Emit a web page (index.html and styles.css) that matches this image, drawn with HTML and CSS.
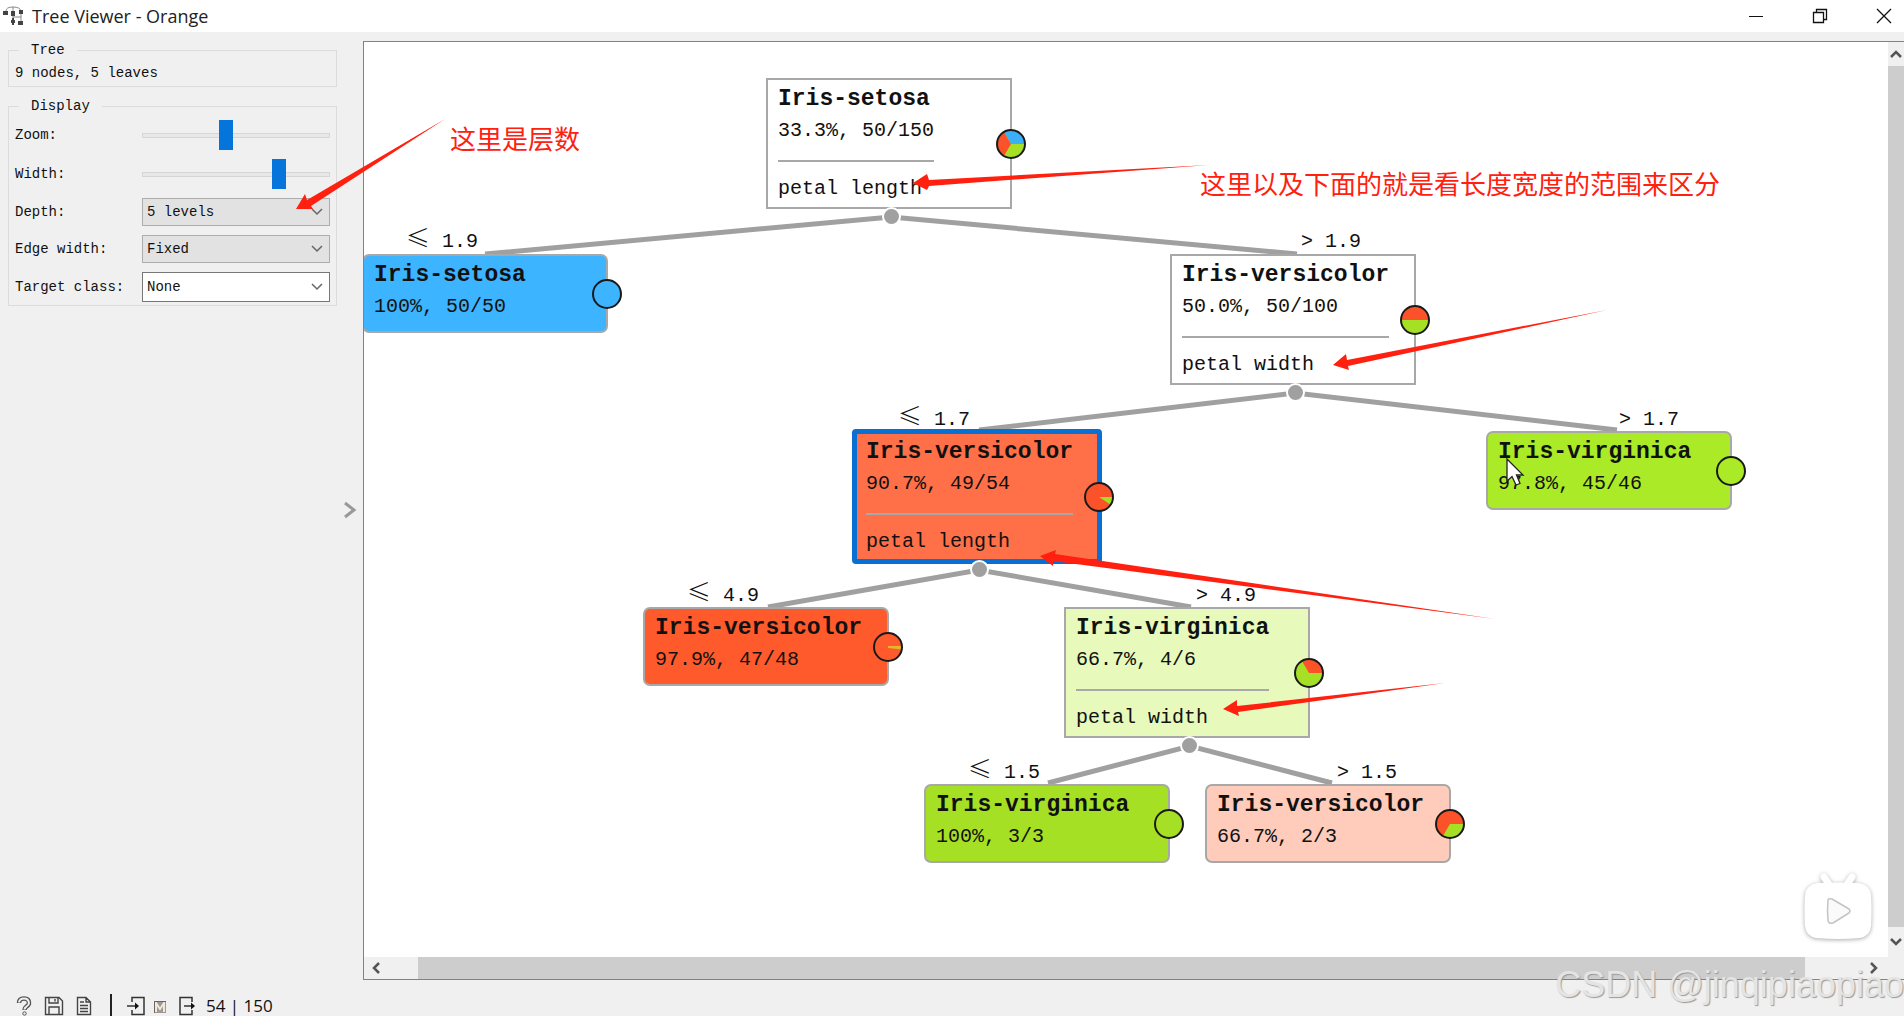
FILE: index.html
```html
<!DOCTYPE html>
<html lang="en">
<head>
<meta charset="utf-8">
<title>Tree Viewer - Orange</title>
<link rel="stylesheet" href="styles.css">
</head>
<body>
<header class="titlebar">
  <svg class="app-icon" width="20" height="20" viewBox="0 0 20 20" fill="#444" stroke="#888">
    <path d="M3 5Q3 1 10 1T18 5M10 1V12M10 11H18M18 8V15" fill="none"/>
    <path stroke="none" d="M0 5h5v4H0zM8 5h4v5H8zM16 4h4v4h-4zM8 14h4v3H8zM9 12h2v7H9zM15 15h5v4h-5z"/>
  </svg>
  <h1 class="title">Tree Viewer - Orange</h1>
  <div class="window-buttons">
    <button type="button" aria-label="Minimize"><svg width="16" height="16" stroke="#111" fill="none"><path d="M1 8.500h14"/></svg></button>
    <button type="button" aria-label="Restore"><svg width="16" height="16" stroke="#111" fill="none" stroke-width="1.300"><path d="M1.500 4.500h10v10h-10zM4.500 4V1.500h10v10H12"/></svg></button>
    <button type="button" aria-label="Close"><svg width="16" height="16" stroke="#111" fill="none" stroke-width="1.300"><path d="M1 1L15 15M15 1L1 15"/></svg></button>
  </div>
</header>

<div class="workspace">
  <aside class="sidebar">
    <fieldset class="group">
      <legend>Tree</legend>
      <p class="summary">9 nodes, 5 leaves</p>
    </fieldset>
    <fieldset class="group">
      <legend>Display</legend>
      <div class="controls">
        <label for="zoom">Zoom:</label>
        <input id="zoom" type="range" min="0" max="100" value="44">
        <label for="width">Width:</label>
        <input id="width" type="range" min="0" max="100" value="75">
        <label for="depth">Depth:</label>
        <select id="depth"><option>5 levels</option></select>
        <label for="edge">Edge width:</label>
        <select id="edge"><option>Fixed</option></select>
        <label for="target">Target class:</label>
        <select id="target" class="light"><option>None</option></select>
      </div>
    </fieldset>
  </aside>

  <button type="button" class="splitter" aria-label="Toggle panel">
    <svg width="14" height="18" fill="none" stroke="#999" stroke-width="3"><path d="M2 2L11 9L2 16"/></svg>
  </button>

  <main class="view">
    <div class="canvas">
      <svg class="edges" width="100%" height="100%" stroke="#a0a0a0" stroke-width="5" fill="none">
        <path d="M121 212L527 175L933 212M615 388L931 351L1253 388M404 565L615 528L827 565M684 741L826 704L968 741"/>
      </svg>

      <span class="cond c1"><span class="le">≤</span> 1.9</span>
      <span class="cond c2">&gt; 1.9</span>
      <span class="cond c3"><span class="le">≤</span> 1.7</span>
      <span class="cond c4">&gt; 1.7</span>
      <span class="cond c5"><span class="le">≤</span> 4.9</span>
      <span class="cond c6">&gt; 4.9</span>
      <span class="cond c7"><span class="le">≤</span> 1.5</span>
      <span class="cond c8">&gt; 1.5</span>

      <article class="node split n-root">
        <div class="text"><h2>Iris-setosa</h2><p>33.3%, 50/150</p><hr><p>petal length</p></div>
        <svg class="pie" width="30" height="30" viewBox="-15 -15 30 30"><circle r="14" fill="#a6e024"/><path fill="#3bb0f8" d="M0 0H14A14 14 0 0 0 -7 -12z"/><path fill="#fb5229" d="M0 0L-7 -12A14 14 0 0 0 -7 12z"/><circle class="rim" r="14"/></svg>
        <i class="dot"></i>
      </article>
      <article class="node n-setosa">
        <div class="text"><h2>Iris-setosa</h2><p>100%, 50/50</p></div>
        <svg class="pie" width="30" height="30" viewBox="-15 -15 30 30"><circle r="14" fill="#3db4ff"/><circle class="rim" r="14"/></svg>
      </article>
      <article class="node split n-versi">
        <div class="text"><h2>Iris-versicolor</h2><p>50.0%, 50/100</p><hr><p>petal width</p></div>
        <svg class="pie" width="30" height="30" viewBox="-15 -15 30 30"><circle r="14" fill="#a6e024"/><path fill="#fb5229" d="M14 0A14 14 0 0 0 -14 0z"/><circle class="rim" r="14"/></svg>
        <i class="dot"></i>
      </article>
      <article class="node split selected n-versi54">
        <div class="text"><h2>Iris-versicolor</h2><p>90.7%, 49/54</p><hr><p>petal length</p></div>
        <svg class="pie" width="30" height="30" viewBox="-15 -15 30 30"><circle r="14" fill="#fb5229"/><path fill="#a6e024" d="M0 0H14A14 14 0 0 1 11.700 7.700z"/><circle class="rim" r="14"/></svg>
        <i class="dot"></i>
      </article>
      <article class="node n-virg46">
        <div class="text"><h2>Iris-virginica</h2><p>97.8%, 45/46</p></div>
        <svg class="pie" width="30" height="30" viewBox="-15 -15 30 30"><circle r="14" fill="#aaea26"/><circle class="rim" r="14"/></svg>
      </article>
      <article class="node n-versi48">
        <div class="text"><h2>Iris-versicolor</h2><p>97.9%, 47/48</p></div>
        <svg class="pie" width="30" height="30" viewBox="-15 -15 30 30"><circle r="14" fill="#ff5a2c"/><path fill="#e5b52a" d="M0 -1H14V2.500L0 1z"/><circle class="rim" r="14"/></svg>
      </article>
      <article class="node split n-virg6">
        <div class="text"><h2>Iris-virginica</h2><p>66.7%, 4/6</p><hr><p>petal width</p></div>
        <svg class="pie" width="30" height="30" viewBox="-15 -15 30 30"><circle r="14" fill="#a6e024"/><path fill="#fb5229" d="M0 0H14A14 14 0 0 0 -7 -12z"/><circle class="rim" r="14"/></svg>
        <i class="dot"></i>
      </article>
      <article class="node n-virg3">
        <div class="text"><h2>Iris-virginica</h2><p>100%, 3/3</p></div>
        <svg class="pie" width="30" height="30" viewBox="-15 -15 30 30"><circle r="14" fill="#a6e024"/><circle class="rim" r="14"/></svg>
      </article>
      <article class="node n-versi3">
        <div class="text"><h2>Iris-versicolor</h2><p>66.7%, 2/3</p></div>
        <svg class="pie" width="30" height="30" viewBox="-15 -15 30 30"><circle r="14" fill="#fb5229"/><path fill="#a6e024" d="M0 0H14A14 14 0 0 1 -7 12z"/><circle class="rim" r="14"/></svg>
      </article>

      <span class="note note-depth" lang="zh">这里是层数</span>
      <span class="note note-split" lang="zh">这里以及下面的就是看长度宽度的范围来区分</span>
      <svg class="cursor" width="20" height="30" fill="#fff" stroke="#222" stroke-width="1.300"><path d="M1 1V23L6 18.500L10 27L14 25.500L10.500 17H17z"/></svg>
      <svg class="player" width="80" height="80" viewBox="0 0 80 80" aria-hidden="true">
        <path d="M25 8L31 17M53 8L47 17" stroke="#fff" stroke-width="7" stroke-linecap="round"/>
        <path fill="#fff" d="M18 14Q40 13 60 14Q71 16 72 26Q73 42 72 57Q71 67 61 69Q40 71 17 69Q7 67 6 57Q5 42 6 26Q7 16 18 14z"/>
        <path fill="#fafafa" stroke="#c4c4c4" stroke-width="1.500" stroke-linejoin="round" d="M29 31Q29 29 33 30L50 40Q52 42 50 44L34 54Q29 55 29 51Q28 42 29 31z"/>
      </svg>
    </div>
    <div class="vscroll">
      <button type="button" aria-label="Scroll up"><svg width="12" height="8" class="arrow"><path d="M1 7L6 2L11 7"/></svg></button>
      <div class="thumb"></div>
      <button type="button" aria-label="Scroll down"><svg width="12" height="8" class="arrow"><path d="M1 1L6 6L11 1"/></svg></button>
    </div>
    <div class="hscroll">
      <button type="button" aria-label="Scroll left"><svg width="8" height="12" class="arrow"><path d="M7 1L2 6L7 11"/></svg></button>
      <div class="thumb"></div>
      <button type="button" aria-label="Scroll right"><svg width="8" height="12" class="arrow"><path d="M1 1L6 6L1 11"/></svg></button>
    </div>
  </main>
</div>

<footer class="status">
  <button type="button" aria-label="Help"><svg width="16" height="20" fill="none"><path d="M3 7Q3 2.500 8 2.500T13 7Q13 9 10.500 10.500Q8.500 12 8.500 14" stroke="#555" stroke-width="4.500"/><path d="M3 6.500Q3.500 2.500 8 2.500T13 7Q13 9 10.500 10.500Q8.500 12 8.500 13.500" stroke="#f0f0f0" stroke-width="2"/><circle cx="8.500" cy="17.500" r="1.700" stroke="#555"/></svg></button>
  <button type="button" aria-label="Save"><svg width="20" height="20" fill="none" stroke="#444" stroke-width="1.400"><path d="M1.500 1.500H15L18.500 5V18.500H1.500zM5 1.500V7H14V1.500M11 3V5.500M5 18V11H15V18"/></svg></button>
  <button type="button" aria-label="Report"><svg width="16" height="20" fill="none" stroke="#444" stroke-width="1.400"><path d="M1.500 1.500H10L14.500 6V18.500H1.500zM10 1.500V6H14.500M4 6H8M4 9.500H12M4 12.500H12M4 15.500H12"/></svg></button>
  <i class="divider"></i>
  <svg width="20" height="20" fill="none" stroke="#333" stroke-width="1.500"><path d="M6 6V1.500H18V18.500H6V14M1 10H11"/><path d="M9 6.500L13 10L9 13.500z" fill="#111" stroke="none"/></svg>
  <svg class="model" width="12" height="12" fill="none"><rect width="12" height="12" fill="#999"/><path d="M2 11V2L6 8L10 2V11" stroke="#f5e8d8" stroke-width="2"/><path d="M0 .5H12M.5 0V12" stroke="#666"/></svg>
  <svg width="20" height="20" fill="none" stroke="#333" stroke-width="1.500"><path d="M14 6V1.500H2V18.500H14V14M6 10H15"/><path d="M13 6.500L17 10L13 13.500z" fill="#111" stroke="none"/></svg>
  <span class="counts">54 | 150</span>
</footer>

<svg class="arrows" width="100%" height="100%" fill="#ff2010" aria-hidden="true">
  <path d="M296 209L305 194L307 200L445 119L311 206L313 209z"/>
  <path d="M913 183L927 174L929 180L1209 165L929 186L927 190z"/>
  <path d="M1333 365L1346 354L1347 360L1607 310L1348 366L1349 370z"/>
  <path d="M1040 556L1056 550L1055 554L1495 619L1053 561L1053 566z"/>
  <path d="M1223 709L1237 700L1237 706L1445 683L1238 712L1239 716z"/>
</svg>
<p class="watermark">CSDN @jinqipiaopiao</p>
</body>
</html>
```
FILE: styles.css
```css
* { box-sizing: border-box; }

body {
  margin: 0;
  height: 100vh;
  display: flex;
  flex-direction: column;
  position: relative;
  overflow: hidden;
  background: #f0f0f0;
  color: #111;
  font: 14px/20px "Liberation Mono", "Noto Sans CJK SC", monospace;
}

button {
  display: flex;
  align-items: center;
  justify-content: center;
  padding: 0;
  border: 0;
  background: none;
}

h1, h2, p { margin: 0; }

/* Title bar */
.titlebar {
  display: flex;
  align-items: center;
  gap: 9px;
  height: 32px;
  padding: 0 12px 0 3px;
  background: #fff;
}
.title { flex: 1; font: 18px/32px "Open Sans", sans-serif; color: #222; }
.window-buttons { display: flex; gap: 48px; }

/* Side panel */
.workspace { display: flex; flex: 1; min-height: 0; }
.sidebar { width: 337px; padding: 8px 0 0 8px; }
.group {
  margin: 0 0 9px;
  padding: 0 6px 3px;
  border: 1px solid #dcdcdc;
}
.group legend { margin-left: 4px; padding: 0 12px; }
.summary { padding-top: 3px; }
.controls {
  display: grid;
  grid-template-columns: 1fr 188px;
  grid-template-rows: 30px 30px 28px 28px 30px;
  gap: 9px 0;
  align-items: center;
  padding-top: 4px;
}
.controls select {
  appearance: none;
  width: 100%;
  height: 100%;
  padding: 0 4px;
  border: 1px solid #adadad;
  border-radius: 0;
  color: #111;
  font: inherit;
  background: #e2e2e2 url("data:image/svg+xml,%3Csvg xmlns='http://www.w3.org/2000/svg' width='12' height='8' fill='none' stroke='%23666' stroke-width='1.500'%3E%3Cpath d='M1 1L6 6L11 1'/%3E%3C/svg%3E") no-repeat right 6px center;
}
.controls select.light { background-color: #fff; border-color: #777; }
.controls input {
  appearance: none;
  width: 100%;
  height: 30px;
  margin: 0;
  background: none;
}
.controls input::-webkit-slider-runnable-track {
  height: 5px;
  border: 1px solid #d6d6d6;
  background: #e8e8e8;
}
.controls input::-webkit-slider-thumb {
  appearance: none;
  width: 14px;
  height: 30px;
  margin-top: -14px;
  background: #0575dc;
}
.splitter { width: 26px; padding-top: 8px; }

/* Tree view */
.view {
  flex: 1;
  min-width: 0;
  display: grid;
  grid-template-columns: 1fr 16px;
  grid-template-rows: 1fr 22px;
  margin-top: 9px;
  border: 1px solid #828282;
  border-right: 0;
}
.canvas { position: relative; overflow: hidden; background: #fff; }
.edges { position: absolute; inset: 0; }

.vscroll, .hscroll { display: flex; background: #f0f0f0; }
.vscroll { flex-direction: column; }
.vscroll button { height: 24px; }
.vscroll button:last-child { height: 30px; }
.hscroll { grid-column: 1 / 3; }
.hscroll button:first-child { width: 24px; margin-right: 30px; }
.hscroll button:last-child { width: 24px; margin: 0 18px 0 57px; }
.thumb { flex: 1; background: #cdcdcd; }
.arrow { fill: none; stroke: #555; stroke-width: 2.500; }

.node {
  position: absolute;
  width: 246px;
  height: 79px;
  padding: 3px 10px;
  border: 2px solid #a8a8a8;
  border-radius: 7px;
  font-size: 20px;
  line-height: 31px;
}
.node.split { height: 131px; border-radius: 0; background: #fff; }
.node.selected {
  border-radius: 2px;
  outline: 5px solid #0a6fd2;
  outline-offset: -3px;
}
.text { width: max-content; }
.text h2 { font-size: 23px; line-height: 32px; }
.text hr {
  height: 2px;
  margin: 14px 0 11px;
  border: 0;
  background: #a8a8a8;
}
.pie { position: absolute; right: -16px; top: calc(50% - 15px); }
.rim { fill: none; stroke: #1a1a1a; stroke-width: 2; }
.dot {
  position: absolute;
  left: calc(50% - 7px);
  top: 100%;
  width: 19px;
  height: 19px;
  border: 2px solid #fff;
  border-radius: 50%;
  background: #a0a0a0;
}

.n-root { left: 402px; top: 36px; }
.n-setosa { left: -2px; top: 212px; background: #3db4ff; }
.n-versi { left: 806px; top: 212px; }
.node.n-versi54 { left: 490px; top: 389px; background: #ff7048; }
.n-virg46 { left: 1122px; top: 389px; background: #aaea26; }
.n-versi48 { left: 279px; top: 565px; background: #ff5a2c; }
.node.n-virg6 { left: 700px; top: 565px; background: #e7fabb; }
.n-virg3 { left: 560px; top: 742px; background: #a6e024; }
.n-versi3 { left: 841px; top: 742px; background: #ffcbba; }

.cond { position: absolute; font-size: 20px; line-height: 24px; white-space: pre; }
.le { font: 24px/0 "Noto Sans CJK SC", sans-serif; font-weight: 300; }
.c1 { left: 42px; top: 188px; }
.c2 { left: 937px; top: 188px; }
.c3 { left: 534px; top: 366px; }
.c4 { left: 1255px; top: 366px; }
.c5 { left: 323px; top: 542px; }
.c6 { left: 832px; top: 542px; }
.c7 { left: 604px; top: 719px; }
.c8 { left: 973px; top: 719px; }

/* Annotations over the view */
.note {
  position: absolute;
  color: #ff2010;
  font: 26px/32px "Noto Sans CJK SC", sans-serif;
  white-space: nowrap;
}
.note-depth { left: 86px; top: 80px; }
.note-split { left: 836px; top: 125px; }
.cursor { position: absolute; left: 1142px; top: 416px; }
.player {
  position: absolute;
  right: 9px;
  bottom: 8px;
  filter: drop-shadow(0 1px 2px #aaa);
  fill: none;
}
.arrows { position: absolute; inset: 0; pointer-events: none; }
.watermark {
  position: absolute;
  right: 0;
  bottom: 11px;
  color: #e4e4e4;
  font: 36px/40px "Liberation Sans", sans-serif;
  text-shadow: 1px 1px 1px #999;
  pointer-events: none;
}

/* Status bar */
.status {
  display: flex;
  align-items: center;
  gap: 12px;
  height: 36px;
  padding: 16px 0 0 16px;
}
.status > * { flex: none; }
.divider { width: 2px; height: 24px; margin: 0 2px 0 6px; background: #222; }
.model { margin: 2px 0 0 -4px; }
.counts { margin-left: -4px; font: 17px/20px "Open Sans", sans-serif; }
```
